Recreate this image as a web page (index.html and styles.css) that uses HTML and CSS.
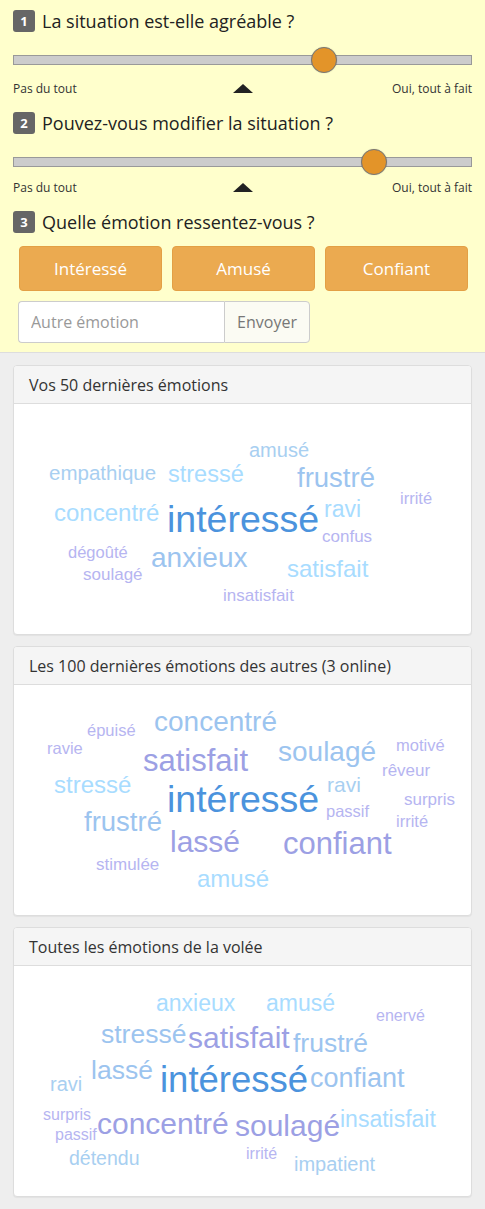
FILE: index.html
```html
<!DOCTYPE html>
<html lang="fr">
<head>
<meta charset="utf-8">
<title>Émotions</title>
<link rel="stylesheet" href="styles.css">
</head>
<body>
<div class="top">
  <div class="q q1">
    <div class="q-title"><span class="badge">1</span>La situation est-elle agréable ?</div>
    <div class="slider"><div class="track"></div><div class="thumb" style="left: 67.8%"></div></div>
    <div class="scale"><span>Pas du tout</span><span class="tri"></span><span class="right">Oui, tout à fait</span></div>
  </div>
  <div class="q q2">
    <div class="q-title"><span class="badge">2</span>Pouvez-vous modifier la situation ?</div>
    <div class="slider"><div class="track"></div><div class="thumb" style="left: 78.7%"></div></div>
    <div class="scale"><span>Pas du tout</span><span class="tri"></span><span class="right">Oui, tout à fait</span></div>
  </div>
  <div class="q q3">
    <div class="q-title"><span class="badge">3</span>Quelle émotion ressentez-vous ?</div>
    <div class="choices">
      <button class="choice">Intéressé</button>
      <button class="choice">Amusé</button>
      <button class="choice">Confiant</button>
    </div>
    <div class="other">
      <input class="other-input" type="text" placeholder="Autre émotion">
      <button class="other-btn">Envoyer</button>
    </div>
  </div>
</div>

<div class="panels">
  <div class="panel">
    <div class="panel-head">Vos 50 dernières émotions</div>
    <div class="panel-body">
      <svg class="cloud" viewBox="0 0 456 230" width="456" height="230">
        <text x="235" y="53" font-size="20" class="c-l2">amusé</text>
        <text x="35" y="76" font-size="20.5" class="c-l2">empathique</text>
        <text x="154" y="78" font-size="23.5" class="c-cy">stressé</text>
        <text x="283" y="83" font-size="27.5" class="c-md">frustré</text>
        <text x="386" y="100" font-size="16.5" class="c-lv">irrité</text>
        <text x="40" y="117" font-size="24" class="c-cy">concentré</text>
        <text x="153" y="128" font-size="37.5" class="c-bl">intéressé</text>
        <text x="310" y="113" font-size="23" class="c-cy">ravi</text>
        <text x="308" y="138" font-size="17" class="c-lv">confus</text>
        <text x="54" y="154" font-size="16.5" class="c-lv">dégoûté</text>
        <text x="137" y="163" font-size="28" class="c-md">anxieux</text>
        <text x="69" y="176" font-size="17" class="c-lv">soulagé</text>
        <text x="273" y="173" font-size="24" class="c-cy">satisfait</text>
        <text x="209" y="197" font-size="17" class="c-lv">insatisfait</text>
      </svg>
    </div>
  </div>

  <div class="panel">
    <div class="panel-head">Les 100 dernières émotions des autres (3 online)</div>
    <div class="panel-body">
      <svg class="cloud" viewBox="0 0 456 230" width="456" height="230">
        <text x="140" y="46" font-size="28" class="c-md">concentré</text>
        <text x="73" y="51" font-size="16.5" class="c-lv">épuisé</text>
        <text x="33" y="69" font-size="16.5" class="c-lv">ravie</text>
        <text x="129" y="86" font-size="31" class="c-pu">satisfait</text>
        <text x="264" y="76" font-size="28" class="c-md">soulagé</text>
        <text x="382" y="66" font-size="16.5" class="c-lv">motivé</text>
        <text x="368" y="91" font-size="17" class="c-lv">rêveur</text>
        <text x="40" y="108" font-size="24" class="c-cy">stressé</text>
        <text x="313" y="107" font-size="21" class="c-l2">ravi</text>
        <text x="153" y="127" font-size="37.5" class="c-bl">intéressé</text>
        <text x="390" y="120" font-size="17" class="c-lv">surpris</text>
        <text x="312" y="132" font-size="16.5" class="c-lv">passif</text>
        <text x="382" y="142" font-size="16.5" class="c-lv">irrité</text>
        <text x="70" y="146" font-size="27.5" class="c-md">frustré</text>
        <text x="156" y="167" font-size="30" class="c-pu">lassé</text>
        <text x="269" y="169" font-size="31" class="c-pu">confiant</text>
        <text x="82" y="185" font-size="17" class="c-lv">stimulée</text>
        <text x="183" y="202" font-size="24" class="c-cy">amusé</text>
      </svg>
    </div>
  </div>

  <div class="panel">
    <div class="panel-head">Toutes les émotions de la volée</div>
    <div class="panel-body">
      <svg class="cloud" viewBox="0 0 456 230" width="456" height="230">
        <text x="142" y="45" font-size="23" class="c-cy">anxieux</text>
        <text x="252" y="45" font-size="23" class="c-cy">amusé</text>
        <text x="362" y="55" font-size="16" class="c-lv">enervé</text>
        <text x="87" y="77" font-size="26.5" class="c-md">stressé</text>
        <text x="174" y="82" font-size="30" class="c-pu">satisfait</text>
        <text x="279" y="86" font-size="26.5" class="c-md">frustré</text>
        <text x="77" y="113" font-size="26.5" class="c-md">lassé</text>
        <text x="146" y="126" font-size="36.5" class="c-bl">intéressé</text>
        <text x="296" y="121" font-size="27" class="c-md">confiant</text>
        <text x="36" y="125" font-size="20" class="c-l2">ravi</text>
        <text x="29" y="154" font-size="16" class="c-lv">surpris</text>
        <text x="41" y="174" font-size="16" class="c-lv">passif</text>
        <text x="83" y="168" font-size="30" class="c-pu">concentré</text>
        <text x="221" y="170" font-size="30" class="c-pu">soulagé</text>
        <text x="326" y="161" font-size="23" class="c-cy">insatisfait</text>
        <text x="55" y="199" font-size="19.5" class="c-l2">détendu</text>
        <text x="232" y="193" font-size="16" class="c-lv">irrité</text>
        <text x="280" y="205" font-size="20" class="c-l2">impatient</text>
      </svg>
    </div>
  </div>
</div>
</body>
</html>
```

FILE: styles.css
```css
* { box-sizing: border-box; }

html, body {
  margin: 0;
  padding: 0;
}

body {
  background: #eeeeee;
  font-family: "Open Sans", "Liberation Sans", sans-serif;
  color: #333333;
}

.top {
  background: #ffffcc;
  padding: 10px 13px 9px 13px;
  border-bottom: 1px solid #dddddd;
  height: 353px;
}

.q2 {
  margin-top: 16px;
}

.q2 .scale {
  margin-top: 4px;
}

.q3 {
  margin-top: 16px;
}

.q-title {
  display: flex;
  align-items: center;
  gap: 7px;
  height: 22px;
  font-size: 18px;
  color: #222222;
}

.badge {
  display: inline-flex;
  align-items: center;
  justify-content: center;
  width: 22px;
  height: 22px;
  border-radius: 3px;
  background: #666666;
  color: #ffffff;
  font-size: 13px;
  font-weight: 700;
}

.slider {
  position: relative;
  display: flex;
  align-items: center;
  height: 26px;
  margin-top: 15px;
}

.track {
  flex: 1;
  height: 10px;
  background: #cccccc;
  border: 1px solid #999999;
}

.thumb {
  position: absolute;
  top: 0;
  width: 26px;
  height: 26px;
  margin-left: -13px;
  border-radius: 50%;
  background: #e39429;
  border: 1px solid #777777;
  box-shadow: 0 0 1px rgba(0, 0, 0, 0.3);
}

.scale {
  display: grid;
  grid-template-columns: 1fr auto 1fr;
  align-items: center;
  margin-top: 7px;
  height: 16px;
  font-size: 12px;
  color: #333333;
}

.scale .right {
  text-align: right;
}

.tri {
  width: 0;
  height: 0;
  border-left: 10px solid transparent;
  border-right: 10px solid transparent;
  border-bottom: 9px solid #222222;
}

.choices {
  display: flex;
  gap: 10px;
  margin-top: 13px;
  padding-left: 6px;
}

.choice {
  width: 143px;
  height: 45px;
  background: #ebaa50;
  border: 1px solid #e3a045;
  border-radius: 4px;
  color: #ffffff;
  font-family: "Open Sans", "Liberation Sans", sans-serif;
  font-size: 17px;
  padding: 0;
}

.other {
  display: flex;
  margin-top: 10px;
  margin-left: 5px;
  height: 42px;
}

.other-input {
  width: 206px;
  height: 42px;
  border: 1px solid #cccccc;
  border-right: none;
  border-radius: 4px 0 0 4px;
  background: #ffffff;
  padding: 0 0 0 12px;
  font-family: "Open Sans", "Liberation Sans", sans-serif;
  font-size: 16px;
  color: #555555;
}

.other-input::placeholder {
  color: #999999;
}

.other-btn {
  width: 86px;
  height: 42px;
  border: 1px solid #cccccc;
  border-radius: 0 4px 4px 0;
  background: #fbfbf3;
  font-family: "Open Sans", "Liberation Sans", sans-serif;
  font-size: 16px;
  color: #777777;
  padding: 0;
}

.panels {
  padding: 12px 13px 0 13px;
}

.panel {
  background: #ffffff;
  border: 1px solid #dddddd;
  border-radius: 4px;
  margin-bottom: 11px;
  box-shadow: 0 1px 1px rgba(0, 0, 0, 0.05);
  overflow: hidden;
}

.panel-head {
  height: 38px;
  display: flex;
  align-items: center;
  padding: 0 15px;
  background: #f5f5f5;
  border-bottom: 1px solid #dddddd;
  font-size: 16px;
  color: #333333;
}

.panel-body {
  height: 230px;
}

.cloud {
  display: block;
  font-family: "Liberation Sans", Arial, sans-serif;
}

.c-bl { fill: #4b93dd; }
.c-md { fill: #9cc4ef; }
.c-cy { fill: #a8dcff; }
.c-l2 { fill: #a8cff1; }
.c-lv { fill: #b6b5f1; }
.c-pu { fill: #9ca0e4; }
```
